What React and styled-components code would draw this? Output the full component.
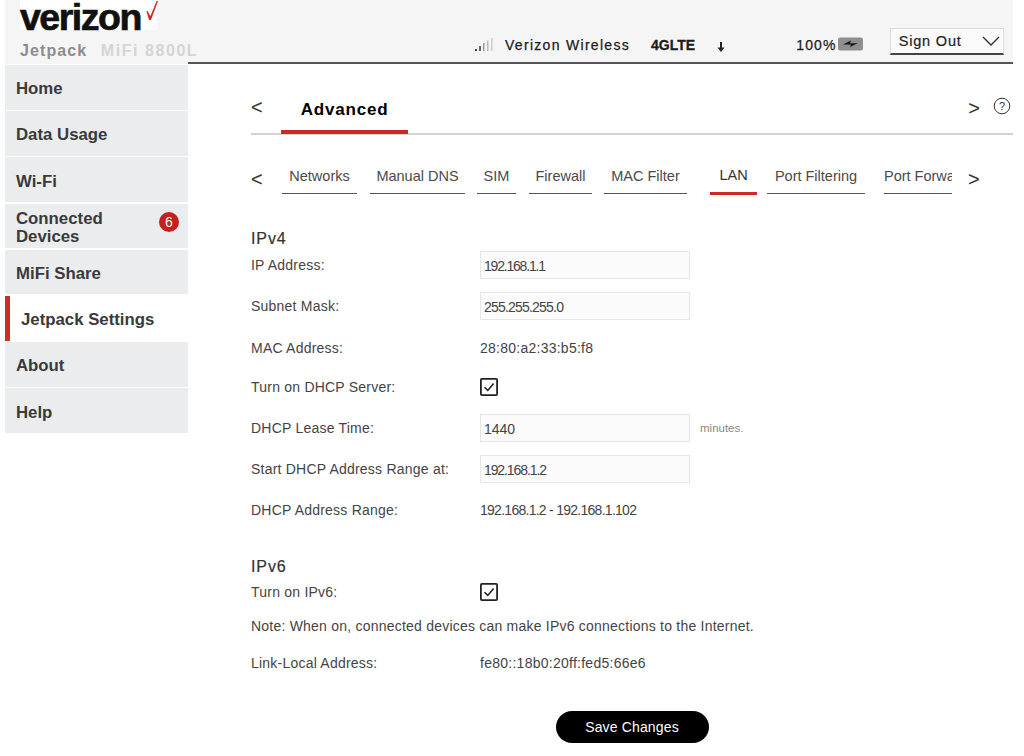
import React from "react";
import styled, { createGlobalStyle } from "styled-components";

const Global = createGlobalStyle`
  html, body { margin: 0; padding: 0; background: #fff; overflow: hidden; }
  * { box-sizing: border-box; }
  body { font-family: "Liberation Sans", Arial, sans-serif; color: #333; }
`;
const Page = styled.div`
  width: 1008px; height: 756px; margin-left: 5px; display: flex; flex-direction: column;
`;
const Header = styled.header`
  height: 64px; background: #f5f5f5; display: flex; position: relative; flex: none;
`;
const HeaderRule = styled.div`
  position: absolute; left: 183px; right: 0; bottom: 0; height: 2px; background: #555;
`;
const Brand = styled.div`
  width: 470px; padding-left: 15px; display: flex; flex-direction: column; flex: none;
`;
const LogoBox = styled.div`
  width: 137px; height: 30px; padding-top: 2px; background: #fff; display: flex; align-items: flex-start; position: relative;
`;
const LogoText = styled.span`
  font-size: 37.5px; line-height: 30px; font-weight: 700; color: #111; letter-spacing: -1.5px; -webkit-text-stroke: 0.7px #111;
`;
const LogoCheck = styled.svg`
  position: absolute; left: 110px; top: 0; width: 29px; height: 23px;
`;
const Model = styled.div`
  margin-top: 11px; font-size: 16px; line-height: 20px; letter-spacing: 1.1px; white-space: nowrap; color: #8c8c8c; font-weight: 700;
`;
const ModelLight = styled.span`
  color: #d4d4d4; margin-left: 8px; font-weight: 700; letter-spacing: 1.55px;
`;
const Status = styled.div`
  flex: 1; display: flex; align-items: flex-start; padding-top: 28px; position: relative;
`;
const StatusText = styled.span`
  font-size: 14px; line-height: 17px; margin-top: 9px; letter-spacing: ${p => p.$ls}; font-weight: ${p => p.$bold ? 700 : 400}; color: #1c1c1c; margin-left: ${p => p.$ml}px; white-space: nowrap; -webkit-text-stroke: ${p => p.$bold ? "0.3px" : "0.25px"} #1c1c1c;
`;
const Signal = styled.svg`
  width: 20px; height: 14px; margin-top: 10px; flex: none;
`;
const ArrowIcon = styled.svg`
  width: 8px; height: 10px; margin: 14px 0 0 22px; flex: none;
`;
const Battery = styled.svg`
  width: 26px; height: 14px; margin: 9px 0 0 1px; flex: none;
`;
const SignOut = styled.div`
  width: 114px; height: 27px; margin-left: 26px; border: 1px solid #ddd; border-bottom: 2px solid #444; background: #fafafa; display: flex; align-items: center; justify-content: space-between; padding: 0 2px 0 8px; font-size: 14.5px; letter-spacing: 0.8px; color: #222; -webkit-text-stroke: 0.2px #222; flex: none;
`;
const Body = styled.div`
  flex: 1; display: flex; min-height: 0;
`;
const Nav = styled.nav`
  width: 183px; flex: none; display: flex; flex-direction: column; gap: 1.6px; padding-top: 1px;
`;
const NavItem = styled.div`
  height: 44.6px; background: ${p => p.$active ? "#fff" : "#ebecee"}; display: flex; align-items: center; justify-content: space-between; padding: 4px 9px 0 11px; font-size: 16.8px; line-height: 18px; font-weight: 700; color: #3a3a3a; border-left: ${p => p.$active ? "5px solid #cd2f27" : "0"};
`;
const Badge = styled.span`
  width: 20px; height: 20px; border-radius: 50%; background: #c4201d; color: #fff; font-size: 14px; font-weight: 400; display: flex; align-items: center; justify-content: center; flex: none; margin-bottom: 11px;
`;
const Main = styled.main`
  flex: 1; padding-left: 63px; min-width: 0; display: flex; flex-direction: column;
`;
const TopTabs = styled.div`
  height: 71px; display: flex; align-items: flex-end; border-bottom: 2px solid #d3d3d3; flex: none; position: relative;
`;
const Chevron = styled.span`
  font-size: 20px; line-height: 24px; color: #333; font-family: "Liberation Sans", sans-serif;
`;
const TopPrev = styled(Chevron)`
  width: 30px; align-self: flex-start; margin-top: 31px;
`;
const Advanced = styled.div`
  width: 127px; height: 34px; text-align: center; font-size: 17px; line-height: 20px; font-weight: 700; color: #000; letter-spacing: 0.8px; border-bottom: 4px solid #c92a26; margin-bottom: -1px; flex: none;
`;
const TopRight = styled.div`
  margin-left: auto; display: flex; align-items: flex-start; gap: 13px; align-self: flex-start; margin-top: 32px; padding-right: 2px;
`;
const Help = styled.svg`
  width: 18px; height: 18px; flex: none; margin-top: 1px;
`;
const SubTabs = styled.div`
  display: flex; align-items: flex-start; height: 60px; flex: none; padding-top: 30px;
`;
const SubPrev = styled(Chevron)`
  width: 31px; margin-top: 2px; flex: none;
`;
const SubNext = styled(Chevron)`
  margin-left: 16px; margin-top: 2px; flex: none;
`;
const SubTab = styled.div`
  width: ${p => p.$w}px; margin-left: ${p => p.$ml || 0}px; flex: none; overflow: hidden; white-space: nowrap; text-align: ${p => p.$clip ? "left" : "center"}; font-size: 14.5px; line-height: 23px; color: ${p => p.$active ? "#333" : "#4a4a4a"}; border-bottom: ${p => p.$active ? "3px solid #c92a26" : "1px solid #555"}; margin-top: ${p => p.$active ? "-1px" : "0"}; height: ${p => p.$active ? "31px" : "29px"};
`;
const Form = styled.div`
  display: flex; flex-direction: column; padding-top: 27px;
`;
const Heading = styled.h2`
  margin: 0; font-size: 16px; line-height: 20px; font-weight: 400; letter-spacing: 0.9px; color: #333; margin-top: ${p => p.$mt || 0}px; -webkit-text-stroke: 0.2px #333;
`;
const Row = styled.div`
  height: ${p => p.$h}px; margin-top: ${p => p.$mt || 0}px; display: flex; align-items: center; font-size: 14px; letter-spacing: 0.22px; color: #444; flex: none;
`;
const Label = styled.span`
  width: 229px; flex: none; white-space: nowrap;
`;
const Value = styled.span`
  font-size: 14px; letter-spacing: ${p => p.$ls}px; color: #444;
`;
const Field = styled.div`
  width: 210px; height: 28px; background: #fbfbfb; border: 1px solid #e6e6e6; padding: 2px 0 0 3px; display: flex; align-items: center; font-size: 14px; letter-spacing: ${p => p.$ls}px; color: #444; flex: none;
`;
const Unit = styled.span`
  font-size: 11.5px; letter-spacing: 0; color: #888; margin-left: 10px;
`;
const Check = styled.svg`
  width: 18px; height: 18px; flex: none;
`;
const Note = styled(Row)`
  white-space: nowrap;
`;
const Footer = styled.div`
  display: flex; justify-content: center; margin-top: 30px; width: 762px;
`;
const Save = styled.button`
  width: 153px; height: 32px; border: 0; border-radius: 16px; background: #000; color: #fff; font-family: inherit; font-size: 14px; letter-spacing: 0.15px; padding: 0;
`;
const Caret = styled.svg`
  width: 20px; height: 12px; flex: none;
`;

const CheckBox = () => (
  <Check viewBox="0 0 18 18">
    <rect x="0.9" y="0.9" width="16.2" height="16.2" rx="1" fill="#fff" stroke="#222" strokeWidth="1.8" />
    <path d="M4.5 9.2 L7.8 12.4 L13.6 5.6" fill="none" stroke="#222" strokeWidth="1.6" />
  </Check>
);

const subTabs = [
  ["Networks", 75, 0], ["Manual DNS", 95, 13], ["SIM", 39, 12], ["Firewall", 63, 13], ["MAC Filter", 83, 12],
];

export default function App() {
  return (
    <Page>
      <Global />
      <Header>
        <Brand>
          <LogoBox>
            <LogoText>verizon</LogoText>
            <LogoCheck viewBox="0 0 29 23">
              <path d="M19 20 L21 20 L28 1 L26.6 1 L20.4 16 L17.5 11 L16.4 11 Z" fill="#d52b1e" />
            </LogoCheck>
          </LogoBox>
          <Model>Jetpack <ModelLight>MiFi 8800L</ModelLight></Model>
        </Brand>
        <Status>
          <Signal viewBox="0 0 20 14">
            <rect x="0" y="11" width="2" height="2" fill="#444" />
            <rect x="4" y="8" width="2" height="5" fill="#666" />
            <rect x="8" y="5" width="1.5" height="8" fill="#999" />
            <rect x="12" y="2.5" width="1.5" height="10.5" fill="#bbb" />
            <rect x="16" y="0" width="1.5" height="13" fill="#ccc" />
          </Signal>
          <StatusText $ml={10} $ls="1.3px">Verizon Wireless</StatusText>
          <StatusText $ml={21} $bold $ls="0">4GLTE</StatusText>
          <ArrowIcon viewBox="0 0 8 10">
            <path d="M3 0 H5 V5.5 H7.5 L4 10 L0.5 5.5 H3 Z" fill="#222" />
          </ArrowIcon>
          <StatusText $ml={71} $ls="1.2px">100%</StatusText>
          <Battery viewBox="0 0 26 14">
            <rect x="0" y="0.5" width="25" height="13" rx="2" fill="#8f8f8f" />
            <path d="M5 7.5 L13 3.5 L12 6.5 L20 6 L12 10 L13 7.5 Z" fill="#111" />
          </Battery>
          <SignOut>
            Sign Out
            <Caret viewBox="0 0 20 12">
              <path d="M2 2 L10 10 L18 2" fill="none" stroke="#333" strokeWidth="1.4" />
            </Caret>
          </SignOut>
        </Status>
        <HeaderRule />
      </Header>
      <Body>
        <Nav>
          <NavItem>Home</NavItem>
          <NavItem>Data Usage</NavItem>
          <NavItem>Wi-Fi</NavItem>
          <NavItem><span>Connected<br />Devices</span><Badge>6</Badge></NavItem>
          <NavItem>MiFi Share</NavItem>
          <NavItem $active>Jetpack Settings</NavItem>
          <NavItem>About</NavItem>
          <NavItem>Help</NavItem>
        </Nav>
        <Main>
          <TopTabs>
            <TopPrev>&lt;</TopPrev>
            <Advanced>Advanced</Advanced>
            <TopRight>
              <Chevron>&gt;</Chevron>
              <Help viewBox="0 0 18 18">
                <circle cx="9" cy="9" r="7.8" fill="none" stroke="#333" strokeWidth="1" />
                <text x="9" y="13" textAnchor="middle" fontSize="11" fill="#333" fontFamily="Liberation Sans">?</text>
              </Help>
            </TopRight>
          </TopTabs>
          <SubTabs>
            <SubPrev>&lt;</SubPrev>
            {subTabs.map(([t, w, ml]) => <SubTab key={t} $w={w} $ml={ml}>{t}</SubTab>)}
            <SubTab $w={47} $ml={23} $active>LAN</SubTab>
            <SubTab $w={98} $ml={10}>Port Filtering</SubTab>
            <SubTab $w={68} $ml={19} $clip>Port Forwarding</SubTab>
            <SubNext>&gt;</SubNext>
          </SubTabs>
          <Form>
            <Heading $mt={7}>IPv4</Heading>
            <Row $h={32}><Label>IP Address:</Label><Field $ls={-1.2}>192.168.1.1</Field></Row>
            <Row $h={46} $mt={2}><Label>Subnet Mask:</Label><Field $ls={-0.8}>255.255.255.0</Field></Row>
            <Row $h={38}><Label>MAC Address:</Label><Value $ls={0.25}>28:80:a2:33:b5:f8</Value></Row>
            <Row $h={40}><Label>Turn on DHCP Server:</Label><CheckBox /></Row>
            <Row $h={40} $mt={1}><Label>DHCP Lease Time:</Label><Field $ls={0}>1440</Field><Unit>minutes.</Unit></Row>
            <Row $h={42}><Label>Start DHCP Address Range at:</Label><Field $ls={-1.1}>192.168.1.2</Field></Row>
            <Row $h={40}><Label>DHCP Address Range:</Label><Value $ls={-0.73}>192.168.1.2 - 192.168.1.102</Value></Row>
            <Heading $mt={27}>IPv6</Heading>
            <Row $h={30}><Label>Turn on IPv6:</Label><CheckBox /></Row>
            <Note $h={38}>Note: When on, connected devices can make IPv6 connections to the Internet.</Note>
            <Row $h={36}><Label>Link-Local Address:</Label><Value $ls={0.26}>fe80::18b0:20ff:fed5:66e6</Value></Row>
          </Form>
          <Footer><Save>Save Changes</Save></Footer>
        </Main>
      </Body>
    </Page>
  );
}
